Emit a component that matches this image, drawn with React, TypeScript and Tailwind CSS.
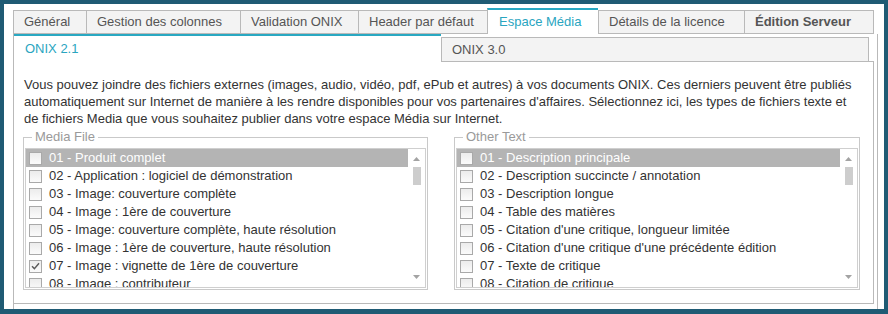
import React from "react";

type Item = { label: string; checked?: boolean };

const mediaFiles: Item[] = [
  { label: "01 - Produit complet" },
  { label: "02 - Application : logiciel de démonstration" },
  { label: "03 - Image: couverture complète" },
  { label: "04 - Image : 1ère de couverture" },
  { label: "05 - Image: couverture complète, haute résolution" },
  { label: "06 - Image : 1ère de couverture, haute résolution" },
  { label: "07 - Image : vignette de 1ère de couverture", checked: true },
  { label: "08 - Image : contributeur" },
];

const otherTexts: Item[] = [
  { label: "01 - Description principale" },
  { label: "02 - Description succincte / annotation" },
  { label: "03 - Description longue" },
  { label: "04 - Table des matières" },
  { label: "05 - Citation d'une critique, longueur limitée" },
  { label: "06 - Citation d'une critique d'une précédente édition" },
  { label: "07 - Texte de critique" },
  { label: "08 - Citation de critique" },
];

const tabs = [
  { label: "Général", w: "w-[73px]" },
  { label: "Gestion des colonnes", w: "w-[154px]" },
  { label: "Validation ONIX", w: "w-[118px]" },
  { label: "Header par défaut", w: "w-[129px]" },
  { label: "Espace Média", w: "w-[111px]", active: true },
  { label: "Détails de la licence", w: "w-[146px]" },
  { label: "Édition Serveur", w: "w-[130px]", bold: true, last: true },
];

const Checkbox: React.FC<{ checked?: boolean }> = ({ checked }) => (
  <span className="w-[13px] h-[13px] shrink-0 border border-[#a9a9a9] bg-gradient-to-b from-[#ececec] to-[#fbfbfb] flex items-center justify-center">
    {checked && (
      <svg width="9" height="8" viewBox="0 0 9 8">
        <path d="M1 4.2 L3.4 6.6 L8 1.2" fill="none" stroke="#5a5a5a" strokeWidth="1.4" />
      </svg>
    )}
  </span>
);

const ListBox: React.FC<{ items: Item[]; legend: string; width: string }> = ({ items, legend, width }) => (
  <fieldset className={`${width} border border-[#c9c9c9] pt-[4px] px-[1px] pb-[1px]`}>
    <legend className="ml-[7px] px-[3px] text-[#9a9a9a] leading-[14px]">{legend}</legend>
    <div className="h-[140px] border border-[#cfcfcf] flex overflow-hidden bg-white">
      <div className="flex-1 min-w-0">
        {items.map((item, i) => (
          <div
            key={item.label}
            className={`h-[18px] flex items-center pl-[3px] gap-[7px] whitespace-nowrap ${
              i === 0 ? "bg-[#b4b4b4] text-white" : "text-[#333333]"
            }`}
          >
            <Checkbox checked={item.checked} />
            <span>{item.label}</span>
          </div>
        ))}
      </div>
      <div className="w-[17px] shrink-0 flex flex-col items-center pt-[8px] pb-[8px]">
        <svg width="7" height="4" viewBox="0 0 7 4">
          <path d="M0 4 L3.5 0 L7 4 Z" fill="#a3a3a3" />
        </svg>
        <div className="w-[8px] h-[18px] bg-[#cdcdcd] mt-[6px]" />
        <div className="flex-1" />
        <svg width="7" height="4" viewBox="0 0 7 4">
          <path d="M0 0 L3.5 4 L7 0 Z" fill="#a3a3a3" />
        </svg>
      </div>
    </div>
  </fieldset>
);

export default function App() {
  return (
    <div
      className="w-[888px] h-[314px] bg-[#1f5b74] pt-[4px] px-[4px] pb-[5px] text-[13px]"
      style={{ fontFamily: '"Liberation Sans", Arial, sans-serif' }}
    >
      <div className="h-full bg-white pl-[9px] pt-[4px] flex flex-col overflow-hidden">
        <div className="flex items-end h-[26px] shrink-0">
          {tabs.map((t) =>
            t.active ? (
              <div
                key={t.label}
                className={`${t.w} h-[26px] border-t-2 border-t-[#29a8c2] border-l border-[#b9b9b9] bg-white text-[#2aa5bf] pl-[11px] flex items-center`}
              >
                {t.label}
              </div>
            ) : (
              <div
                key={t.label}
                className={`${t.w} h-[24px] border-t border-l border-b ${t.last ? "border-r" : ""} border-[#b9b9b9] bg-[#f3f3f3] text-[#555555] pl-[10px] flex items-center ${
                  t.bold ? "font-bold" : ""
                }`}
              >
                {t.label}
              </div>
            )
          )}
        </div>
        <div className="w-[865px] flex-1 border-l border-r border-[#b9b9b9]">
          <div className="flex items-end h-[28px]">
            <div className="w-[427px] h-[28px] border-t-2 border-[#29a8c2] text-[#2aa5bf] pl-[11px] flex items-center">
              ONIX 2.1
            </div>
            <div className="w-[428px] h-[25px] border border-[#b9b9b9] bg-[#f3f3f3] text-[#555555] pl-[10px] flex items-center">
              ONIX 3.0
            </div>
            <div className="w-[5px] border-b border-[#b9b9b9]" />
          </div>
          <div className="w-[860px] h-[242px] border-r border-b border-[#b9b9b9] pt-[14px]">
            <p className="pl-[10px] leading-[17px] text-[#333333] whitespace-nowrap">
              Vous pouvez joindre des fichiers externes (images, audio, vidéo, pdf, ePub et autres) à vos documents ONIX. Ces derniers peuvent être publiés
              <br />
              automatiquement sur Internet de manière à les rendre disponibles pour vos partenaires d'affaires. Sélectionnez ici, les types de fichiers texte et
              <br />
              de fichiers Media que vous souhaitez publier dans votre espace Média sur Internet.
            </p>
            <div className="flex gap-[26px] pl-[9px] mt-[3px]">
              <ListBox items={mediaFiles} legend="Media File" width="w-[405px]" />
              <ListBox items={otherTexts} legend="Other Text" width="w-[406px]" />
            </div>
          </div>
        </div>
      </div>
    </div>
  );
}
